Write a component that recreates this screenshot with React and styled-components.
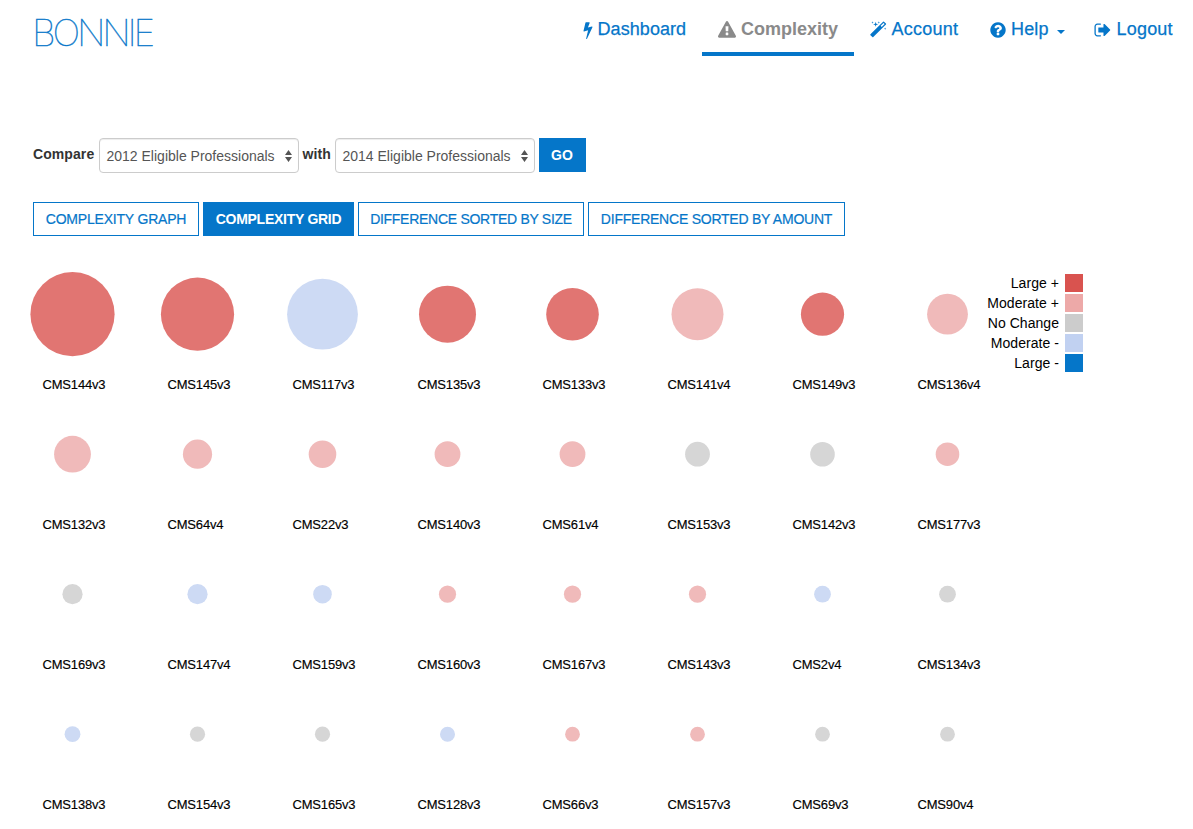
import React from "react";
import styled, { createGlobalStyle } from "styled-components";

const BLUE = "#0576c9";

const GlobalStyle = createGlobalStyle`
  *, *::before, *::after { box-sizing: border-box; }
  html, body { margin: 0; padding: 0; height: 829px; overflow: hidden; background: #fff; }
  body { font-family: "Liberation Sans", Arial, sans-serif; font-size: 14px; color: #333; }
  button, select { font-family: inherit; }
`;

const Page = styled.div`
  width: 1193px;
  height: 829px;
  overflow: hidden;
`;

const Header = styled.header`
  display: flex;
  justify-content: space-between;
  height: 138px;
  padding: 0 4px 0 32px;
`;

const Logo = styled.a`
  font-family: Inter, "Lato", sans-serif;
  font-weight: 100;
  font-size: 37px;
  line-height: 66px;
  letter-spacing: -3.2px;
  color: ${BLUE};
  -webkit-text-stroke: 0.4px ${BLUE};
`;

const Nav = styled.nav`
  display: flex;
  height: 56px;
`;

const NavItem = styled.a`
  display: flex;
  align-items: center;
  width: ${(p) => p.$width}px;
  padding: 7px 0 0 16px;
  white-space: nowrap;
  font-size: 18px;
  -webkit-text-stroke: ${(p) => (p.$active ? "0" : "0.25px")} currentColor;
  font-weight: ${(p) => (p.$active ? 700 : 400)};
  letter-spacing: ${(p) => p.$spacing || 0}px;
  color: ${(p) => (p.$active ? "#8a8a8a" : BLUE)};
  border-bottom: 4px solid ${(p) => (p.$active ? BLUE : "transparent")};
`;

const Icon = styled.svg`
  display: block;
  flex: none;
  width: ${(p) => p.$w}px;
  height: 18px;
  margin-right: ${(p) => p.$gap || 4}px;
  fill: currentColor;
`;

const Caret = styled.span`
  margin: 4px 0 0 8px;
  border: 4px solid transparent;
  border-top-color: currentColor;
  border-bottom: 0;
`;

const CompareForm = styled.form`
  display: flex;
  height: 64px;
  padding-left: 33px;
`;

const Label = styled.label`
  width: ${(p) => p.$width}px;
  font-weight: 700;
  font-size: 14px;
  line-height: 32px;
  letter-spacing: 0.08px;
`;

const SelectBox = styled.div`
  display: flex;
  align-items: center;
  justify-content: space-between;
  width: 200px;
  height: 35px;
  padding: 1px 6px 0 7px;
  border: 1px solid #ccc;
  border-radius: 4px;
  box-shadow: inset 0 1px 1px rgba(0, 0, 0, 0.075);
  font-size: 14px;
  color: #555;
  margin-right: 4px;
  white-space: nowrap;
`;

const Arrows = styled.svg`
  width: 7px;
  height: 12px;
  fill: #555;
`;

const Button = styled.button`
  width: ${(p) => p.$width}px;
  height: 34px;
  padding: 0;
  border: 1px solid ${BLUE};
  background: ${(p) => (p.$solid ? BLUE : "#fff")};
  color: ${(p) => (p.$solid ? "#fff" : BLUE)};
  font-size: 14px;
  font-weight: ${(p) => (p.$solid ? 700 : 400)};
  -webkit-text-stroke: ${(p) => (p.$solid ? "0" : "0.2px")} currentColor;
  letter-spacing: ${(p) => p.$spacing || 0}px;
  white-space: nowrap;
`;

const Tabs = styled.div`
  display: flex;
  gap: 4px;
  height: 62px;
  padding-left: 33px;
`;

const Content = styled.main`
  display: flex;
`;

const Grid = styled.div`
  display: grid;
  grid-template-columns: repeat(8, 125px);
  grid-auto-rows: 140px;
  width: 967px;
  padding-left: 10px;
`;

const Cell = styled.div`
  display: flex;
  flex-direction: column;
  width: 125px;
`;

const Bubble = styled.svg`
  display: block;
  flex: none;
  width: 125px;
  height: 100px;
`;

const MeasureName = styled.span`
  padding: 2px 0 0 32.5px;
  font-size: 13px;
  line-height: 38px;
  letter-spacing: -0.18px;
  color: #000;
  -webkit-text-stroke: 0.15px #000;
`;

const Legend = styled.ul`
  display: flex;
  flex-direction: column;
  gap: 2px;
  width: 116px;
  margin: 10.3px 0 0;
  padding: 0;
  list-style: none;
`;

const LegendRow = styled.li`
  display: flex;
  align-items: center;
  justify-content: flex-end;
  gap: 6px;
  height: 18px;
  font-size: 14px;
  letter-spacing: 0.05px;
  color: #000;
  white-space: nowrap;
`;

const Swatch = styled.span`
  width: 18px;
  height: 18px;
  background: ${(p) => p.$color};
`;

const paths = {
  bolt: "M1333 566q18 20 7 44l-540 1157q-13 25-42 25-4 0-14-2-17-5-25.5-19t-4.5-30l197-808-406 101q-4 1-12 1-18 0-31-11-18-15-13-39l201-825q4-14 16-23t28-9h328q19 0 32 12.5t13 29.5q0 8-5 18l-171 463 396-98q8-2 12-2 19 0 34 15z",
  warning: "M1024 1375v-190q0-14-9.5-23.5t-22.5-9.5h-192q-13 0-22.5 9.5t-9.5 23.5v190q0 14 9.5 23.5t22.5 9.5h192q13 0 22.5-9.5t9.5-23.5zm-2-374l18-459q0-12-10-19-13-11-24-11h-220q-11 0-24 11-10 7-10 21l17 457q0 10 10 16.5t24 6.5h185q14 0 23.5-6.5t10.5-16.5zm-14-934l768 1408q35 63-2 126-17 29-46.5 46t-63.5 17h-1536q-34 0-63.5-17t-46.5-46q-37-63-2-126l768-1408q17-31 47-49t65-18 65 18 47 49z",
  magic: "M1254 581l293-293-107-107-293 293zm447-293q0 27-18 45l-1286 1286q-18 18-45 18t-45-18l-198-198q-18-18-18-45t18-45l1286-1286q18-18 45-18t45 18l198 198q18 18 18 45zm-1351-190l98 30-98 30-30 98-30-98-98-30 98-30 30-98zm350 162l196 60-196 60-60 196-60-196-196-60 196-60 60-196zm930 478l98 30-98 30-30 98-30-98-98-30 98-30 30-98zm-640-640l98 30-98 30-30 98-30-98-98-30 98-30 30-98z",
  help: "M1024 1376v-192q0-14-9-23t-23-9h-192q-14 0-23 9t-9 23v192q0 14 9 23t23 9h192q14 0 23-9t9-23zm256-672q0-88-55.5-163t-138.5-116-170-41q-243 0-371 213-15 24 8 42l132 100q7 6 19 6 16 0 25-12 53-68 86-92 34-24 86-24 48 0 85.5 26t37.5 59q0 38-20 61t-68 45q-63 28-115.5 86.5t-52.5 125.5v36q0 14 9 23t23 9h192q14 0 23-9t9-23q0-19 21.5-49.5t54.5-49.5q32-18 49-28.5t46-35 44.5-48 28-60.5 12.5-81zm384 192q0 209-103 385.5t-279.5 279.5-385.5 103-385.5-103-279.5-279.5-103-385.5 103-385.5 279.5-279.5 385.5-103 385.5 103 279.5 279.5 103 385.5z",
  logout: "M704 1440q0 4 1 20t.5 26.5-3 23.5-10 19.5-20.5 6.5h-320q-119 0-203.5-84.5t-84.5-203.5v-704q0-119 84.5-203.5t203.5-84.5h320q13 0 22.5 9.5t9.5 22.5q0 4 1 20t.5 26.5-3 23.5-10 19.5-20.5 6.5h-320q-66 0-113 47t-47 113v704q0 66 47 113t113 47h312l11.5 1 11.5 3 8 5.5 7 9 2 13.5zm928-544q0 26-19 45l-544 544q-19 19-45 19t-45-19-19-45v-288h-448q-26 0-45-19t-19-45v-384q0-26 19-45t45-19h448v-288q0-26 19-45t45-19 45 19l544 544q19 19 19 45z",
};

const navItems = [
  { label: "Dashboard", icon: "bolt", box: "448 0 900 1792", iconWidth: 10, gap: 4.5, width: 135, spacing: 0.07 },
  { label: "Complexity", icon: "warning", box: "0 0 1792 1792", iconWidth: 18, gap: 5, width: 152, active: true },
  { label: "Account", icon: "magic", box: "64 0 1728 1792", iconWidth: 17, gap: 4.5, width: 120, spacing: 0.25 },
  { label: "Help", icon: "help", box: "128 0 1536 1792", iconWidth: 16, gap: 5, width: 104, spacing: 0.15, caret: true },
  { label: "Logout", icon: "logout", box: "64 0 1600 1792", iconWidth: 17, gap: 5.5, width: 111, spacing: 0.2 },
];

const legend = [
  ["Large +", "#d9534f"],
  ["Moderate +", "#eda9a8"],
  ["No Change", "#cccccc"],
  ["Moderate -", "#c1d1f1"],
  ["Large -", BLUE],
];

const fills = { large: "#e17572", up: "#f0baba", same: "#d6d6d6", down: "#cddaf4" };

const measures = [
  ["CMS144v3", 42.1, "large"], ["CMS145v3", 36.6, "large"], ["CMS117v3", 35.4, "down"], ["CMS135v3", 28.5, "large"],
  ["CMS133v3", 26.3, "large"], ["CMS141v4", 26, "up"], ["CMS149v3", 21.6, "large"], ["CMS136v4", 20.4, "up"],
  ["CMS132v3", 18.4, "up"], ["CMS64v4", 14.6, "up"], ["CMS22v3", 13.8, "up"], ["CMS140v3", 12.9, "up"],
  ["CMS61v4", 12.9, "up"], ["CMS153v3", 12.4, "same"], ["CMS142v3", 12.3, "same"], ["CMS177v3", 11.8, "up"],
  ["CMS169v3", 10.1, "same"], ["CMS147v4", 10.1, "down"], ["CMS159v3", 9.3, "down"], ["CMS160v3", 8.6, "up"],
  ["CMS167v3", 8.6, "up"], ["CMS143v3", 8.6, "up"], ["CMS2v4", 8.4, "down"], ["CMS134v3", 8.4, "same"],
  ["CMS138v3", 7.9, "down"], ["CMS154v3", 7.6, "same"], ["CMS165v3", 7.6, "same"], ["CMS128v3", 7.5, "down"],
  ["CMS66v3", 7.4, "up"], ["CMS157v3", 7.4, "up"], ["CMS69v3", 7.4, "same"], ["CMS90v4", 7.4, "same"],
];

function Select({ value }) {
  return (
    <SelectBox>
      <span>{value}</span>
      <Arrows viewBox="0 0 7 12"><path d="M3.5 0L7 5H0zM3.5 12L0 7H7z" /></Arrows>
    </SelectBox>
  );
}

export default function App() {
  return (
    <Page>
      <GlobalStyle />
      <Header>
        <Logo>BONNIE</Logo>
        <Nav>
          {navItems.map((n) => (
            <NavItem key={n.label} $width={n.width} $active={n.active} $spacing={n.spacing}>
              <Icon viewBox={n.box} $w={n.iconWidth} $gap={n.gap}><path d={paths[n.icon]} /></Icon>
              {n.label}
              {n.caret && <Caret />}
            </NavItem>
          ))}
        </Nav>
      </Header>
      <CompareForm>
        <Label $width={65.5}>Compare</Label>
        <Select value="2012 Eligible Professionals" />
        <Label $width={32}>with</Label>
        <Select value="2014 Eligible Professionals" />
        <Button type="button" $solid $width={47}>GO</Button>
      </CompareForm>
      <Tabs>
        <Button $width={166} $spacing={-0.2}>COMPLEXITY GRAPH</Button>
        <Button $width={151} $spacing={-0.27} $solid>COMPLEXITY GRID</Button>
        <Button $width={226} $spacing={-0.28}>DIFFERENCE SORTED BY SIZE</Button>
        <Button $width={257} $spacing={-0.23}>DIFFERENCE SORTED BY AMOUNT</Button>
      </Tabs>
      <Content>
        <Grid>
          {measures.map(([name, radius, kind]) => (
            <Cell key={name}>
              <Bubble viewBox="0 0 125 100"><circle cx="62.5" cy="50.2" r={radius} fill={fills[kind]} /></Bubble>
              <MeasureName>{name}</MeasureName>
            </Cell>
          ))}
        </Grid>
        <Legend>
          {legend.map(([name, color]) => (
            <LegendRow key={name}>{name}<Swatch $color={color} /></LegendRow>
          ))}
        </Legend>
      </Content>
    </Page>
  );
}
